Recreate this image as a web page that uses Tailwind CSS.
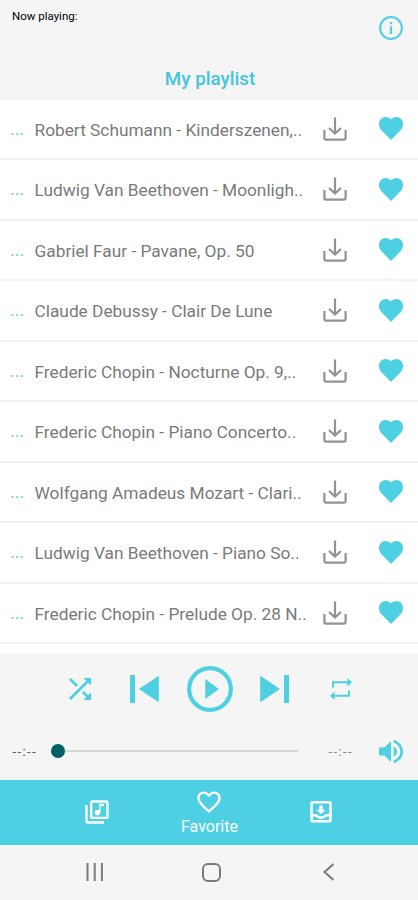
<!DOCTYPE html>
<html lang="en">
<head>
<meta charset="utf-8">
<meta name="viewport" content="width=device-width, initial-scale=1">
<title>My playlist</title>
<script src="https://cdn.jsdelivr.net/npm/@tailwindcss/browser@4"></script>
</head>
<body class="bg-[#f5f5f5]">
<svg class="hidden">
  <symbol id="download" viewBox="0 0 24 24"><path d="M12 .5v16M6 11l6 5.600 6-5.600M1.400 13v8q0 1.700 1.700 1.700h17.800q1.700 0 1.700-1.700v-8" fill="none" stroke="currentColor" stroke-width="2.200"/></symbol>
  <symbol id="heart" viewBox="0 0 24 23"><path fill="currentColor" d="M12 2.400C13.300.9 15.200 0 17.300 0 21.200 0 24 2.900 24 6.900c0 3-1.100 4.900-3.200 7.200L12 23l-8.800-8.900C1.100 11.800 0 9.900 0 6.900 0 2.900 2.800 0 6.700 0c2.100 0 4 .9 5.300 2.400z"/></symbol>
</svg>
<div class="flex h-[900px] w-[418px] flex-col overflow-hidden bg-[#f5f5f5] font-['Roboto',sans-serif]">
  <header class="flex h-[99.5px] shrink-0 flex-col">
    <div class="flex h-[56px] items-start justify-between pr-[15px] pl-[12px]">
      <span class="pt-[8px] text-[11.5px] leading-[17px] text-black">Now playing:</span>
      <svg class="mt-[16px] size-6 text-[#4dd0e1]" viewBox="0 0 24 24"><circle cx="12" cy="12" r="10.900" fill="none" stroke="currentColor" stroke-width="2"/><path fill="currentColor" d="M10.900 6h2.200v2.200h-2.200zM10.900 10.200h2.200v7.800h-2.200z"/></svg>
    </div>
    <h1 class="pt-[10px] pl-[2px] text-center text-[18.800px] leading-[26px] font-medium text-[#41c6dc]">My playlist</h1>
  </header>

  <main class="h-[553.5px] shrink-0 bg-white">
    <ul id="tracks"></ul>
  </main>

  <section class="flex h-[126.5px] shrink-0 flex-col text-[#4dd0e1]">
    <div class="flex h-[71px] items-center pl-[69px]">
      <svg class="mr-[39px] h-[22px] w-[22px]" viewBox="4 4 16 16"><path fill="currentColor" d="M10.590 9.170L5.410 4 4 5.410l5.170 5.170 1.420-1.410zM14.500 4l2.040 2.040L4 18.590 5.410 20 17.960 7.460 20 9.500V4h-5.500zm.33 9.410l-1.410 1.410 3.130 3.130L14.500 20H20v-5.500l-2.040 2.040-3.130-3.130z"/></svg>
      <svg class="h-[28px] w-[29px]" viewBox="0 0 29 28"><path fill="currentColor" d="M0 0h5v28H0zM9 14L28.800.7v26.600z"/></svg>
      <svg class="ml-[27.500px] size-[46px]" viewBox="0 0 47 47"><circle cx="23.500" cy="23.500" r="21.300" fill="none" stroke="currentColor" stroke-width="4.200"/><path fill="currentColor" d="M18.700 13.300v20.400L32.500 23.500z"/></svg>
      <svg class="ml-[27.500px] h-[28px] w-[29px]" viewBox="0 0 29 28"><path fill="currentColor" d="M24 0h5v28h-5zM20 14L.2.700v26.600z"/></svg>
      <svg class="ml-[40.500px] h-[22px] w-[22px]" viewBox="0 0 22 22" fill="none" stroke="currentColor" stroke-width="2"><path d="M3 9.500V4.200h17M19 12.500v5.300H2"/><path fill="currentColor" stroke="none" d="M17.500 0l4.500 4.200-4.500 4.200zM4.500 13.600L0 17.800 4.500 22z"/></svg>
    </div>
    <div class="flex h-[55px] items-center pb-[1px] pl-[12.500px]">
      <span class="w-[38.500px] text-[13px] leading-none tracking-[1.400px] text-[#555]">--:--</span>
      <div class="flex w-[247px] items-center">
        <span class="size-[14px] rounded-full bg-[#006064]"></span>
        <span class="h-[2px] flex-1 bg-[#d6d6d6]"></span>
      </div>
      <span class="ml-[30.500px] w-[50px] text-[13px] leading-none tracking-[1.400px] text-[#888]">--:--</span>
      <svg class="h-[23px] w-[24px]" viewBox="3 3.230 18 17.540" preserveAspectRatio="none"><path fill="currentColor" d="M3 9v6h4l5 5V4L7 9H3zm13.500 3c0-1.770-1.020-3.290-2.500-4.030v8.050c1.480-.73 2.500-2.250 2.500-4.020zM14 3.230v2.060c2.890.86 5 3.540 5 6.710s-2.110 5.850-5 6.710v2.060c4.010-.91 7-4.490 7-8.770s-2.990-7.860-7-8.770z"/></svg>
    </div>
  </section>

  <nav class="flex h-[65px] shrink-0 items-center bg-[#4dd0e3] pl-[41px] text-white">
    <div class="flex w-[112px] justify-center"><svg class="size-[28px]" viewBox="0 0 24 24" fill="currentColor"><path d="M20 2H8c-1.100 0-2 .9-2 2v12c0 1.100.9 2 2 2h12c1.100 0 2-.9 2-2V4c0-1.100-.9-2-2-2zm0 14H8V4h12v12zM12.500 15c1.380 0 2.500-1.120 2.500-2.500V7h3V5h-4v5.510c-.42-.32-.93-.51-1.500-.51-1.380 0-2.500 1.120-2.500 2.500s1.120 2.500 2.500 2.500zM4 6H2v14c0 1.100.9 2 2 2h14v-2H4V6z"/></svg></div>
    <div class="flex w-[112px] flex-col items-center pt-[2px]">
      <svg class="size-[28px]" viewBox="0 0 24 24" fill="currentColor"><path d="M16.500 3c-1.740 0-3.410.81-4.500 2.090C10.910 3.810 9.240 3 7.500 3 4.420 3 2 5.420 2 8.500c0 3.780 3.400 6.860 8.550 11.540L12 21.350l1.450-1.320C18.600 15.360 22 12.280 22 8.500 22 5.420 19.580 3 16.500 3zm-4.400 15.550l-.1.100-.1-.1C7.140 14.240 4 11.390 4 8.500 4 6.500 5.500 5 7.500 5c1.540 0 3.040.99 3.570 2.360h1.870C13.460 5.990 14.960 5 16.500 5c2 0 3.500 1.500 3.500 3.500 0 2.890-3.140 5.740-7.900 10.050z"/></svg>
      <span class="pl-px text-[16px] leading-[22px]">Favorite</span>
    </div>
    <div class="flex w-[112px] justify-center"><svg class="size-[28px]" viewBox="0 0 24 24" fill="currentColor"><path fill-rule="evenodd" d="M5 2.500h14a2 2 0 0 1 2.200 2v14.500a2 2 0 0 1-2.200 2H5a2 2 0 0 1-2.200-2V4.500a2 2 0 0 1 2.200-2zM5 4.700v9h3.500c.7 1.200 2 2 3.500 2s2.800-.8 3.500-2H19v-9zM5 15.800v3h14v-3h-2.400c-1.200 1.300-2.800 2-4.600 2s-3.400-.7-4.600-2z"/><path d="M16 10h-2.500V6.500h-3V10H8l4 4z"/></svg></div>
  </nav>

  <footer class="flex flex-1 items-center pl-[86px] text-[#7b7b7b]">
    <svg class="h-[18px] w-[18px]" viewBox="0 0 18 18"><path d="M1.500 0v18M8.700 0v18M15.900 0v18" stroke="currentColor" stroke-width="2"/></svg>
    <span class="ml-[98px] size-[19px] rounded-[6px] border-2 border-current"></span>
    <svg class="ml-[102px] h-[18px] w-[12px]" viewBox="0 0 12 18"><path d="M10.500 1L1.500 9l9 8" fill="none" stroke="currentColor" stroke-width="2"/></svg>
  </footer>
</div>
<script>
  const tracks = [
    "Robert Schumann - Kinderszenen,..",
    "Ludwig Van Beethoven - Moonligh..",
    "Gabriel Faur - Pavane, Op. 50",
    "Claude Debussy - Clair De Lune",
    "Frederic Chopin - Nocturne Op. 9,..",
    "Frederic Chopin - Piano Concerto..",
    "Wolfgang Amadeus Mozart - Clari..",
    "Ludwig Van Beethoven - Piano So..",
    "Frederic Chopin - Prelude Op. 28 N.."
  ];
  document.getElementById("tracks").innerHTML = tracks.map(t => `
    <li class="flex h-[60.5px] items-center border-b-2 border-[#f1f1f1]">
      <span class="w-[34.5px] pl-[10px] text-[18px] leading-[24px] text-[#6fd5dc]">...</span>
      <span class="w-[288.5px] pt-[2px] whitespace-nowrap text-[17.3px] leading-[24px] text-[#7a7a7a]">${t}</span>
      <svg class="h-[24px] w-[24px] text-[#929292]"><use href="#download"/></svg>
      <svg class="ml-[32px] h-[23px] w-[24px] text-[#4dd0e1]"><use href="#heart"/></svg>
    </li>`).join("");
</script>
</body>
</html>
